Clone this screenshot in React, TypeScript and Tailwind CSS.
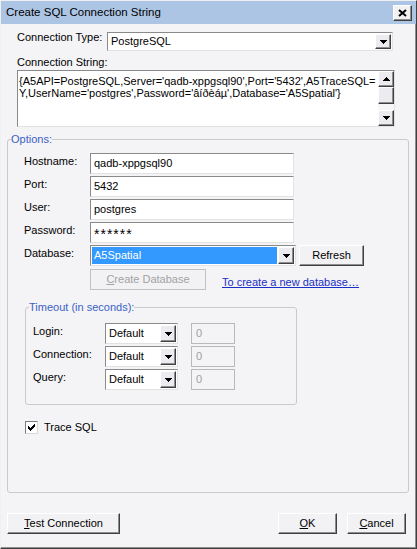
const raised =
  "border border-t-white border-l-white border-r-[#404040] border-b-[#404040] shadow-[inset_-1px_-1px_0_#8e8e8e]";
const sunken =
  "border border-t-[#8a8a8a] border-l-[#8a8a8a] border-r-[#e2e2e2] border-b-[#e2e2e2]";

const Arrow = ({ up = false }: { up?: boolean }) => (
  <svg width="7" height="4" viewBox="0 0 7 4" shapeRendering="crispEdges">
    <path d={up ? "M3.5 0L7 4H0z" : "M0 0h7L3.5 4z"} fill="#000" />
  </svg>
);

const DropBtn = () => (
  <div className={`flex h-full w-[16px] items-center justify-center bg-[#ecebef] ${raised}`}>
    <Arrow />
  </div>
);

type ComboProps = {
  value: string;
  width: string;
  height?: string;
  selected?: boolean;
};

const Combo = ({ value, width, height = "h-[21px]", selected }: ComboProps) => (
  <div className={`flex bg-white p-[1px] ${sunken} ${width} ${height}`}>
    <div
      className={`flex flex-1 items-center pl-[2px] ${
        selected ? "mr-[1px] bg-[#3399ff] text-white" : ""
      }`}
    >
      {value}
    </div>
    <DropBtn />
  </div>
);

const TextBox = ({ children }: { children: React.ReactNode }) => (
  <div className={`flex h-[21px] w-[204px] items-center bg-white pl-[3px] ${sunken}`}>
    {children}
  </div>
);

const Button = ({
  children,
  width,
  disabled,
}: {
  children: React.ReactNode;
  width: string;
  disabled?: boolean;
}) => (
  <div
    className={`flex h-[21px] items-center justify-center bg-[#f2f1f4] ${width} ${
      disabled
        ? "border border-[#c2c2c2] text-[#a3a3a3]"
        : raised
    }`}
  >
    {children}
  </div>
);

const Row = ({ label, children }: { label: string; children: React.ReactNode }) => (
  <div className="mb-[2px] flex h-[21px] items-start">
    <div className="w-[66px] leading-[17px]">{label}</div>
    {children}
  </div>
);

const TimeoutRow = ({ label }: { label: string }) => (
  <div className="mb-[2px] flex h-[21px] items-start">
    <div className="w-[72px] leading-[17px]">{label}</div>
    <Combo value="Default" width="w-[73px]" />
    <div className="ml-[13px] flex h-[21px] w-[44px] items-center border border-[#b9b9b9] pl-[4px] text-[#a0a0a0]">
      0
    </div>
  </div>
);

const App = () => {
  return (
    <div
      className={`flex h-[549px] w-[417px] flex-col bg-[#f4f3f6] font-['Liberation_Sans',Arial,sans-serif] text-[11px] text-black border border-t-[#f0f0f0] border-l-[#f0f0f0] border-r-[#404040] border-b-[#404040] shadow-[inset_-1px_-1px_0_#8e8e8e]`}
    >
      {/* title bar */}
      <div className="flex h-[23px] items-center justify-between bg-[#adc5e4] pl-[5px] pr-[4px]">
        <span className="text-[11.5px]">Create SQL Connection String</span>
        <div className={`flex h-[16px] w-[19px] items-center justify-center bg-[#f2f2f2] ${raised}`}>
          <svg width="9" height="8" viewBox="0 0 9 8">
            <path d="M1 1l7 6M8 1L1 7" stroke="#000" strokeWidth="2" />
          </svg>
        </div>
      </div>

      <div className="px-[6px]">
        <div className="pl-[10px]">
          <div className="mt-[8px] flex items-start">
            <div className="-mt-[1px] w-[90px] leading-[13px]">Connection Type:</div>
            <Combo value="PostgreSQL" width="w-[286px]" height="h-[19px]" />
          </div>
          <div className="mt-[5px] leading-[13px]">Connection String:</div>
          <div className={`mt-[1px] flex h-[57px] w-[378px] bg-white ${sunken}`}>
            <div className="flex-1 pl-[1px] pt-[4px] leading-[12px] whitespace-nowrap">
              <div>{"{A5API=PostgreSQL,Server='qadb-xppgsql90',Port='5432',A5TraceSQL="}</div>
              <div>{"Y,UserName='postgres',Password='âíðèáµ',Database='A5Spatial'}"}</div>
            </div>
            <div className="flex w-[16px] flex-col bg-[#f6f5f8]">
              <div className={`flex h-[16px] items-center justify-center bg-[#ecebef] ${raised}`}>
                <Arrow up />
              </div>
              <div className={`h-[17px] bg-[#ecebef] ${raised}`} />
              <div className="flex-1" />
              <div className={`flex h-[16px] items-center justify-center bg-[#ecebef] ${raised}`}>
                <Arrow />
              </div>
            </div>
          </div>
        </div>

        <fieldset className="mt-[6px] h-[360px] w-[402px] rounded-[3px] border border-[#cbcaca]">
          <legend className="ml-[3px] leading-[13px] text-[#3a62c4]">Options:</legend>
          <div className="pl-[16px] pt-[7px]">
            <Row label="Hostname:">
              <TextBox>qadb-xppgsql90</TextBox>
            </Row>
            <Row label="Port:">
              <TextBox>5432</TextBox>
            </Row>
            <Row label="User:">
              <TextBox>postgres</TextBox>
            </Row>
            <Row label="Password:">
              <TextBox>
                <span className="pt-[3px] text-[14px] tracking-[1px]">******</span>
              </TextBox>
            </Row>
            <div className="flex h-[21px] items-start">
              <div className="w-[66px] leading-[17px]">Database:</div>
              <Combo value="A5Spatial" width="w-[206px]" selected />
              <div className="ml-[3px]">
                <Button width="w-[65px]">Refresh</Button>
              </div>
            </div>
            <div className="mt-[3px] flex items-start pl-[66px]">
              <Button width="w-[116px]" disabled>
                <span>
                  <span className="underline">C</span>reate Database
                </span>
              </Button>
              <span className="ml-[16px] mt-[7px] leading-[13px] text-[#1a2fc4] underline">
                To create a new database…
              </span>
            </div>

            <fieldset className="ml-[1px] mt-[11px] h-[104px] w-[272px] rounded-[3px] border border-[#cbcaca]">
              <legend className="ml-[3px] leading-[13px] text-[#3a62c4]">Timeout (in seconds):</legend>
              <div className="pl-[7px] pt-[9px]">
                <TimeoutRow label="Login:" />
                <TimeoutRow label="Connection:" />
                <TimeoutRow label="Query:" />
              </div>
            </fieldset>

            <div className="ml-[1px] mt-[14px] flex items-center">
              <div className="flex h-[13px] w-[13px] items-center justify-center border border-t-[#7a7a7a] border-l-[#7a7a7a] border-r-[#d8d8d8] border-b-[#d8d8d8] bg-white">
                <svg width="7" height="7" viewBox="0 0 7 7" shapeRendering="crispEdges">
                  <path d="M0 2h1v1h1v1h1V3h1V2h1V1h1V0h1v3H6v1H5v1H4v1H3v1H2V6H1V5H0z" fill="#000" />
                </svg>
              </div>
              <span className="ml-[6px]">Trace SQL</span>
            </div>
          </div>
        </fieldset>

        <div className="mt-[20px] flex w-[399px]">
          <Button width="w-[113px]">
            <span>
              <span className="underline">T</span>est Connection
            </span>
          </Button>
          <div className="ml-auto">
            <Button width="w-[59px]">
              <span>
                <span className="underline">O</span>K
              </span>
            </Button>
          </div>
          <div className="ml-[10px]">
            <Button width="w-[59px]">
              <span>
                <span className="underline">C</span>ancel
              </span>
            </Button>
          </div>
        </div>
      </div>
    </div>
  );
};

export default App;
